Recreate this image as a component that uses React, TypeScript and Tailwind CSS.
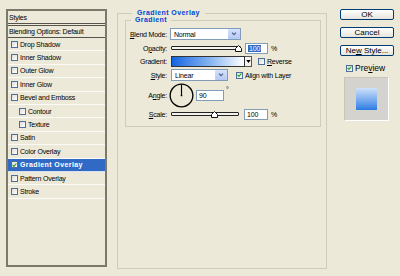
import type { ReactNode } from "react";

const styleItems = [
  { name: "Drop Shadow", indent: false },
  { name: "Inner Shadow", indent: false },
  { name: "Outer Glow", indent: false },
  { name: "Inner Glow", indent: false },
  { name: "Bevel and Emboss", indent: false },
  { name: "Contour", indent: true },
  { name: "Texture", indent: true },
  { name: "Satin", indent: false },
  { name: "Color Overlay", indent: false },
  { name: "Gradient Overlay", indent: false, active: true },
  { name: "Pattern Overlay", indent: false },
  { name: "Stroke", indent: false },
];

const CheckBox = ({ checked = false }: { checked?: boolean }) => (
  <span className="flex h-[7px] w-[7px] shrink-0 items-center justify-center border border-[#4d6f9a] bg-gradient-to-br from-[#dcdcd7] to-white">
    {checked && (
      <svg viewBox="0 0 8 8" className="h-[6px] w-[6px]">
        <path d="M1 4 L3.2 6.2 L7 1.6" stroke="#21a121" strokeWidth="1.8" fill="none" />
      </svg>
    )}
  </span>
);

const Select = ({ value, width }: { value: string; width: string }) => (
  <div className={`flex h-[12px] items-center border border-[#7f9db9] bg-white ${width}`}>
    <span className="flex-1 pl-[3px]">{value}</span>
    <span className="flex h-[10px] w-[12px] items-center justify-center rounded-[1px] bg-gradient-to-b from-[#d6e2fd] to-[#b5c8f5]">
      <svg viewBox="0 0 8 6" className="h-[4px] w-[6px]">
        <path d="M1 1 L4 4 L7 1" stroke="#4d6185" strokeWidth="1.8" fill="none" />
      </svg>
    </span>
  </div>
);

const Slider = ({ width, thumb }: { width: string; thumb: string }) => (
  <div className={`relative h-[4px] ${width}`}>
    <div className="h-full rounded-[1px] border border-[#222] bg-[#f4f3ee]" />
    <svg viewBox="0 0 7 7" className={`absolute top-[-1px] h-[7px] w-[7px] ${thumb}`}>
      <polygon points="3.5,0.5 6.5,3.5 6.5,6.5 0.5,6.5 0.5,3.5" fill="#fff" stroke="#111" strokeWidth="1" />
    </svg>
  </div>
);

const NumBox = ({ children, width }: { children: ReactNode; width: string }) => (
  <div className={`flex h-[11px] items-center border border-[#7f9db9] bg-white pl-[2px] ${width}`}>{children}</div>
);

const Label = ({ children }: { children: ReactNode }) => (
  <span className="w-[41px] shrink-0 text-right">{children}</span>
);

const XpButton = ({ children }: { children: ReactNode }) => (
  <button className="flex h-[11px] w-[54px] items-center justify-center rounded-[2px] border border-[#003c74] bg-gradient-to-b from-white to-[#e6e4dc] text-[8px] tracking-normal">
    {children}
  </button>
);

export default function App() {
  return (
    <div className="flex h-[276px] w-[400px] overflow-hidden bg-[#ece9d8] font-['Liberation_Sans',Arial,sans-serif] text-[7px] leading-none tracking-[-0.2px] text-black">
      {/* styles list */}
      <aside className="ml-[6px] mt-[9px] h-[258px] w-[101px] shrink-0 border-2 border-[#7b786c]">
        <div className="flex h-[15px] items-center border-b-[3px] border-double border-[#55534b] pl-[1px]">Styles</div>
        <div className="flex h-[12px] items-center border-b border-[#55534b] pl-[1px]">Blending Options: Default</div>
        {styleItems.map((item) => (
          <div
            key={item.name}
            className={`flex h-[13.4px] items-center gap-[2px] border-b border-white/80 ${item.indent ? "pl-[11px]" : "pl-[3px]"} ${
              item.active ? "bg-[#316ac5] font-bold tracking-[0.4px] text-white" : ""
            }`}
          >
            <CheckBox checked={item.active} />
            <span>{item.name}</span>
          </div>
        ))}
      </aside>

      {/* gradient overlay settings */}
      <main className="ml-[10px] mt-[10px] w-[210px] shrink-0">
        <fieldset className="h-[259px] border border-[#cfccbd] pl-[7px]">
          <legend className="ml-[7px] px-[5px] font-bold leading-[6px] tracking-[0.4px] text-[#0046d5]">Gradient Overlay</legend>
          <fieldset className="h-[111px] w-[196px] border border-[#cfccbd] pb-[6px] pt-[3px]">
            <legend className="ml-[5px] px-[4px] font-bold leading-[8px] tracking-[0.4px] text-[#0046d5]">Gradient</legend>

            <div className="flex h-[14px] items-center">
              <Label>
                <u>B</u>lend Mode:
              </Label>
              <div className="ml-[3px]">
                <Select value="Normal" width="w-[71px]" />
              </div>
            </div>

            <div className="flex h-[14px] items-center">
              <Label>
                O<u>p</u>acity:
              </Label>
              <div className="ml-[4px]">
                <Slider width="w-[70px]" thumb="left-[64px]" />
              </div>
              <div className="ml-[4px]">
                <NumBox width="w-[23px]">
                  <span className="bg-[#316ac5] px-[1px] text-white">100</span>
                </NumBox>
              </div>
              <span className="ml-[3px]">%</span>
            </div>

            <div className="flex h-[12px] items-center">
              <Label>Gradient:</Label>
              <div className="ml-[4px] h-[11px] w-[74px] border border-[#333] bg-gradient-to-r from-[#0d63e0] via-[#7fb0ef] to-white" />
              <div className="flex h-[11px] w-[7px] items-center justify-center border border-l-0 border-[#555] bg-[#f4f3ee]">
                <svg viewBox="0 0 6 4" className="h-[3px] w-[5px]">
                  <polygon points="0,0 6,0 3,4" fill="#000" />
                </svg>
              </div>
              <div className="ml-[6px]">
                <CheckBox />
              </div>
              <span className="ml-[2px]">
                <u>R</u>everse
              </span>
            </div>

            <div className="flex h-[16px] items-center">
              <Label>
                <u>S</u>tyle:
              </Label>
              <div className="ml-[4px]">
                <Select value="Linear" width="w-[57px]" />
              </div>
              <div className="ml-[8px]">
                <CheckBox checked />
              </div>
              <span className="ml-[2px]">Align with Layer</span>
            </div>

            <div className="flex h-[25px] items-center">
              <Label>
                A<u>n</u>gle:
              </Label>
              <svg viewBox="0 0 26 26" className="ml-[2px] h-[25px] w-[25px]">
                <circle cx="13" cy="13" r="11.8" fill="none" stroke="#000" strokeWidth="1.4" />
                <line x1="13" y1="13" x2="13" y2="2" stroke="#000" strokeWidth="1.2" />
                <circle cx="13" cy="13" r="0.9" fill="#000" />
              </svg>
              <div className="ml-[2px]">
                <NumBox width="w-[28px]">90</NumBox>
              </div>
              <span className="ml-[2px] self-start pt-[3px]">°</span>
            </div>

            <div className="flex h-[12px] items-center">
              <Label>
                <u>S</u>cale:
              </Label>
              <div className="ml-[4px]">
                <Slider width="w-[68px]" thumb="left-[40px]" />
              </div>
              <div className="ml-[5px]">
                <NumBox width="w-[24px]">100</NumBox>
              </div>
              <span className="ml-[3px]">%</span>
            </div>
          </fieldset>
        </fieldset>
      </main>

      {/* buttons + preview */}
      <div className="ml-[13px] mt-[9px] flex w-[54px] shrink-0 flex-col">
        <div className="flex flex-col gap-[7px]">
          <XpButton>OK</XpButton>
          <XpButton>Cancel</XpButton>
          <XpButton>
            Ne<u>w</u>&nbsp;Style...
          </XpButton>
        </div>
        <div className="mt-[8px] flex h-[8px] items-center gap-[2px] pl-[6px] text-[8.5px] tracking-normal">
          <CheckBox checked />
          <span>
            Pre<u>v</u>iew
          </span>
        </div>
        <div className="ml-[4px] mt-[5px] flex h-[44px] w-[45px] items-center justify-center border border-[#c9c6b8] border-b-white border-r-white bg-[#d5d3cd]">
          <div className="h-[22px] w-[21px] bg-gradient-to-b from-[#cfe2f8] to-[#2a7be3]" />
        </div>
      </div>
    </div>
  );
}
